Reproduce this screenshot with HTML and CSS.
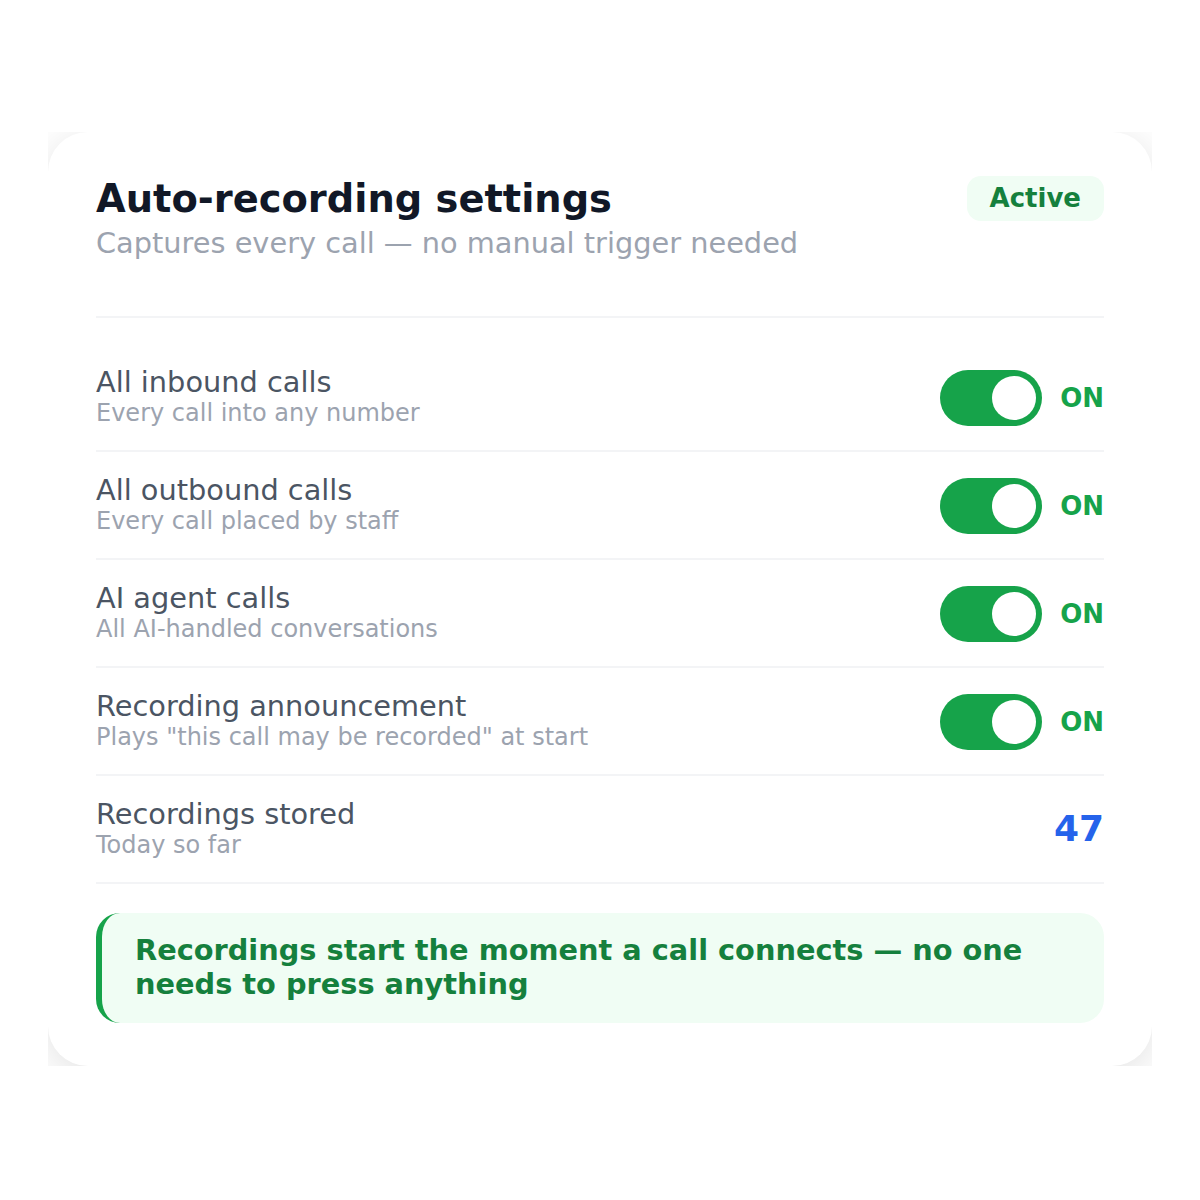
FILE: index.html
```html
<!DOCTYPE html>
<html>
<head>
<meta charset="utf-8">
<link rel="stylesheet" href="styles.css">
</head>
<body>
<div class="frame">
  <div class="card">
    <div class="header">
      <div class="titles">
        <h1 class="title">Auto-recording settings</h1>
        <div class="subtitle">Captures every call — no manual trigger needed</div>
      </div>
      <div class="badge">Active</div>
    </div>
    <div class="rows">
      <div class="row">
        <div class="text">
          <div class="label">All inbound calls</div>
          <div class="sub">Every call into any number</div>
        </div>
        <div class="control"><span class="toggle"><span class="knob"></span></span><span class="on">ON</span></div>
      </div>
      <div class="row">
        <div class="text">
          <div class="label">All outbound calls</div>
          <div class="sub">Every call placed by staff</div>
        </div>
        <div class="control"><span class="toggle"><span class="knob"></span></span><span class="on">ON</span></div>
      </div>
      <div class="row">
        <div class="text">
          <div class="label">AI agent calls</div>
          <div class="sub">All AI-handled conversations</div>
        </div>
        <div class="control"><span class="toggle"><span class="knob"></span></span><span class="on">ON</span></div>
      </div>
      <div class="row">
        <div class="text">
          <div class="label">Recording announcement</div>
          <div class="sub">Plays "this call may be recorded" at start</div>
        </div>
        <div class="control"><span class="toggle"><span class="knob"></span></span><span class="on">ON</span></div>
      </div>
      <div class="row">
        <div class="text">
          <div class="label">Recordings stored</div>
          <div class="sub">Today so far</div>
        </div>
        <div class="count">47</div>
      </div>
    </div>
    <div class="note">Recordings start the moment a call connects — no one needs to press anything</div>
  </div>
</div>
</body>
</html>
```

FILE: styles.css
```css
* { box-sizing: border-box; }
html, body { margin: 0; padding: 0; background: #ffffff; }
body {
  font-family: "DejaVu Sans", Verdana, sans-serif;
  padding: 132px 48px;
}
.frame {
  width: 1104px;
  height: 934px;
  overflow: hidden;
}
.card {
  background: #ffffff;
  border-radius: 40px;
  box-shadow: 0 8px 40px rgba(0, 0, 0, 0.12);
  height: 934px;
  padding: 44px 48px 43px 48px;
}
.header {
  display: flex;
  justify-content: space-between;
  align-items: flex-start;
  padding-bottom: 53px;
  border-bottom: 2px solid #f3f4f6;
}
.title {
  margin: 0;
  font-size: 38.4px;
  line-height: 46px;
  font-weight: 700;
  color: #111827;
}
.subtitle {
  font-size: 28.8px;
  line-height: 40px;
  color: #9ca3af;
  margin-top: 1px;
}
.badge {
  background: #f0fdf4;
  color: #15803d;
  font-weight: 700;
  font-size: 26px;
  line-height: 45px;
  padding: 0 23px;
  border-radius: 14px;
}
.rows {
  padding-top: 26px;
}
.row {
  display: flex;
  justify-content: space-between;
  align-items: center;
  padding: 21px 0 19px;
  border-bottom: 2px solid #f3f4f6;
}
.text {
  padding-bottom: 4px;
}
.label {
  font-size: 28.8px;
  line-height: 34px;
  color: #4b5563;
}
.sub {
  font-size: 24px;
  line-height: 28px;
  color: #9ca3af;
}
.control {
  display: flex;
  align-items: center;
  gap: 18px;
}
.toggle {
  width: 102px;
  height: 56px;
  border-radius: 28px;
  background: #16a34a;
  display: flex;
  align-items: center;
  justify-content: flex-end;
  padding-right: 6px;
}
.knob {
  width: 44px;
  height: 44px;
  border-radius: 50%;
  background: #ffffff;
}
.on {
  font-size: 26px;
  font-weight: 700;
  color: #16a34a;
}
.count {
  font-size: 36px;
  font-weight: 700;
  color: #2563eb;
  padding-bottom: 4px;
}
.note {
  margin-top: 29px;
  background: #f0fdf4;
  border-left: 6px solid #16a34a;
  border-radius: 24px;
  padding: 20px 32px 22px 33px;
  color: #15803d;
  font-weight: 700;
  font-size: 28.8px;
  line-height: 34px;
}
```
